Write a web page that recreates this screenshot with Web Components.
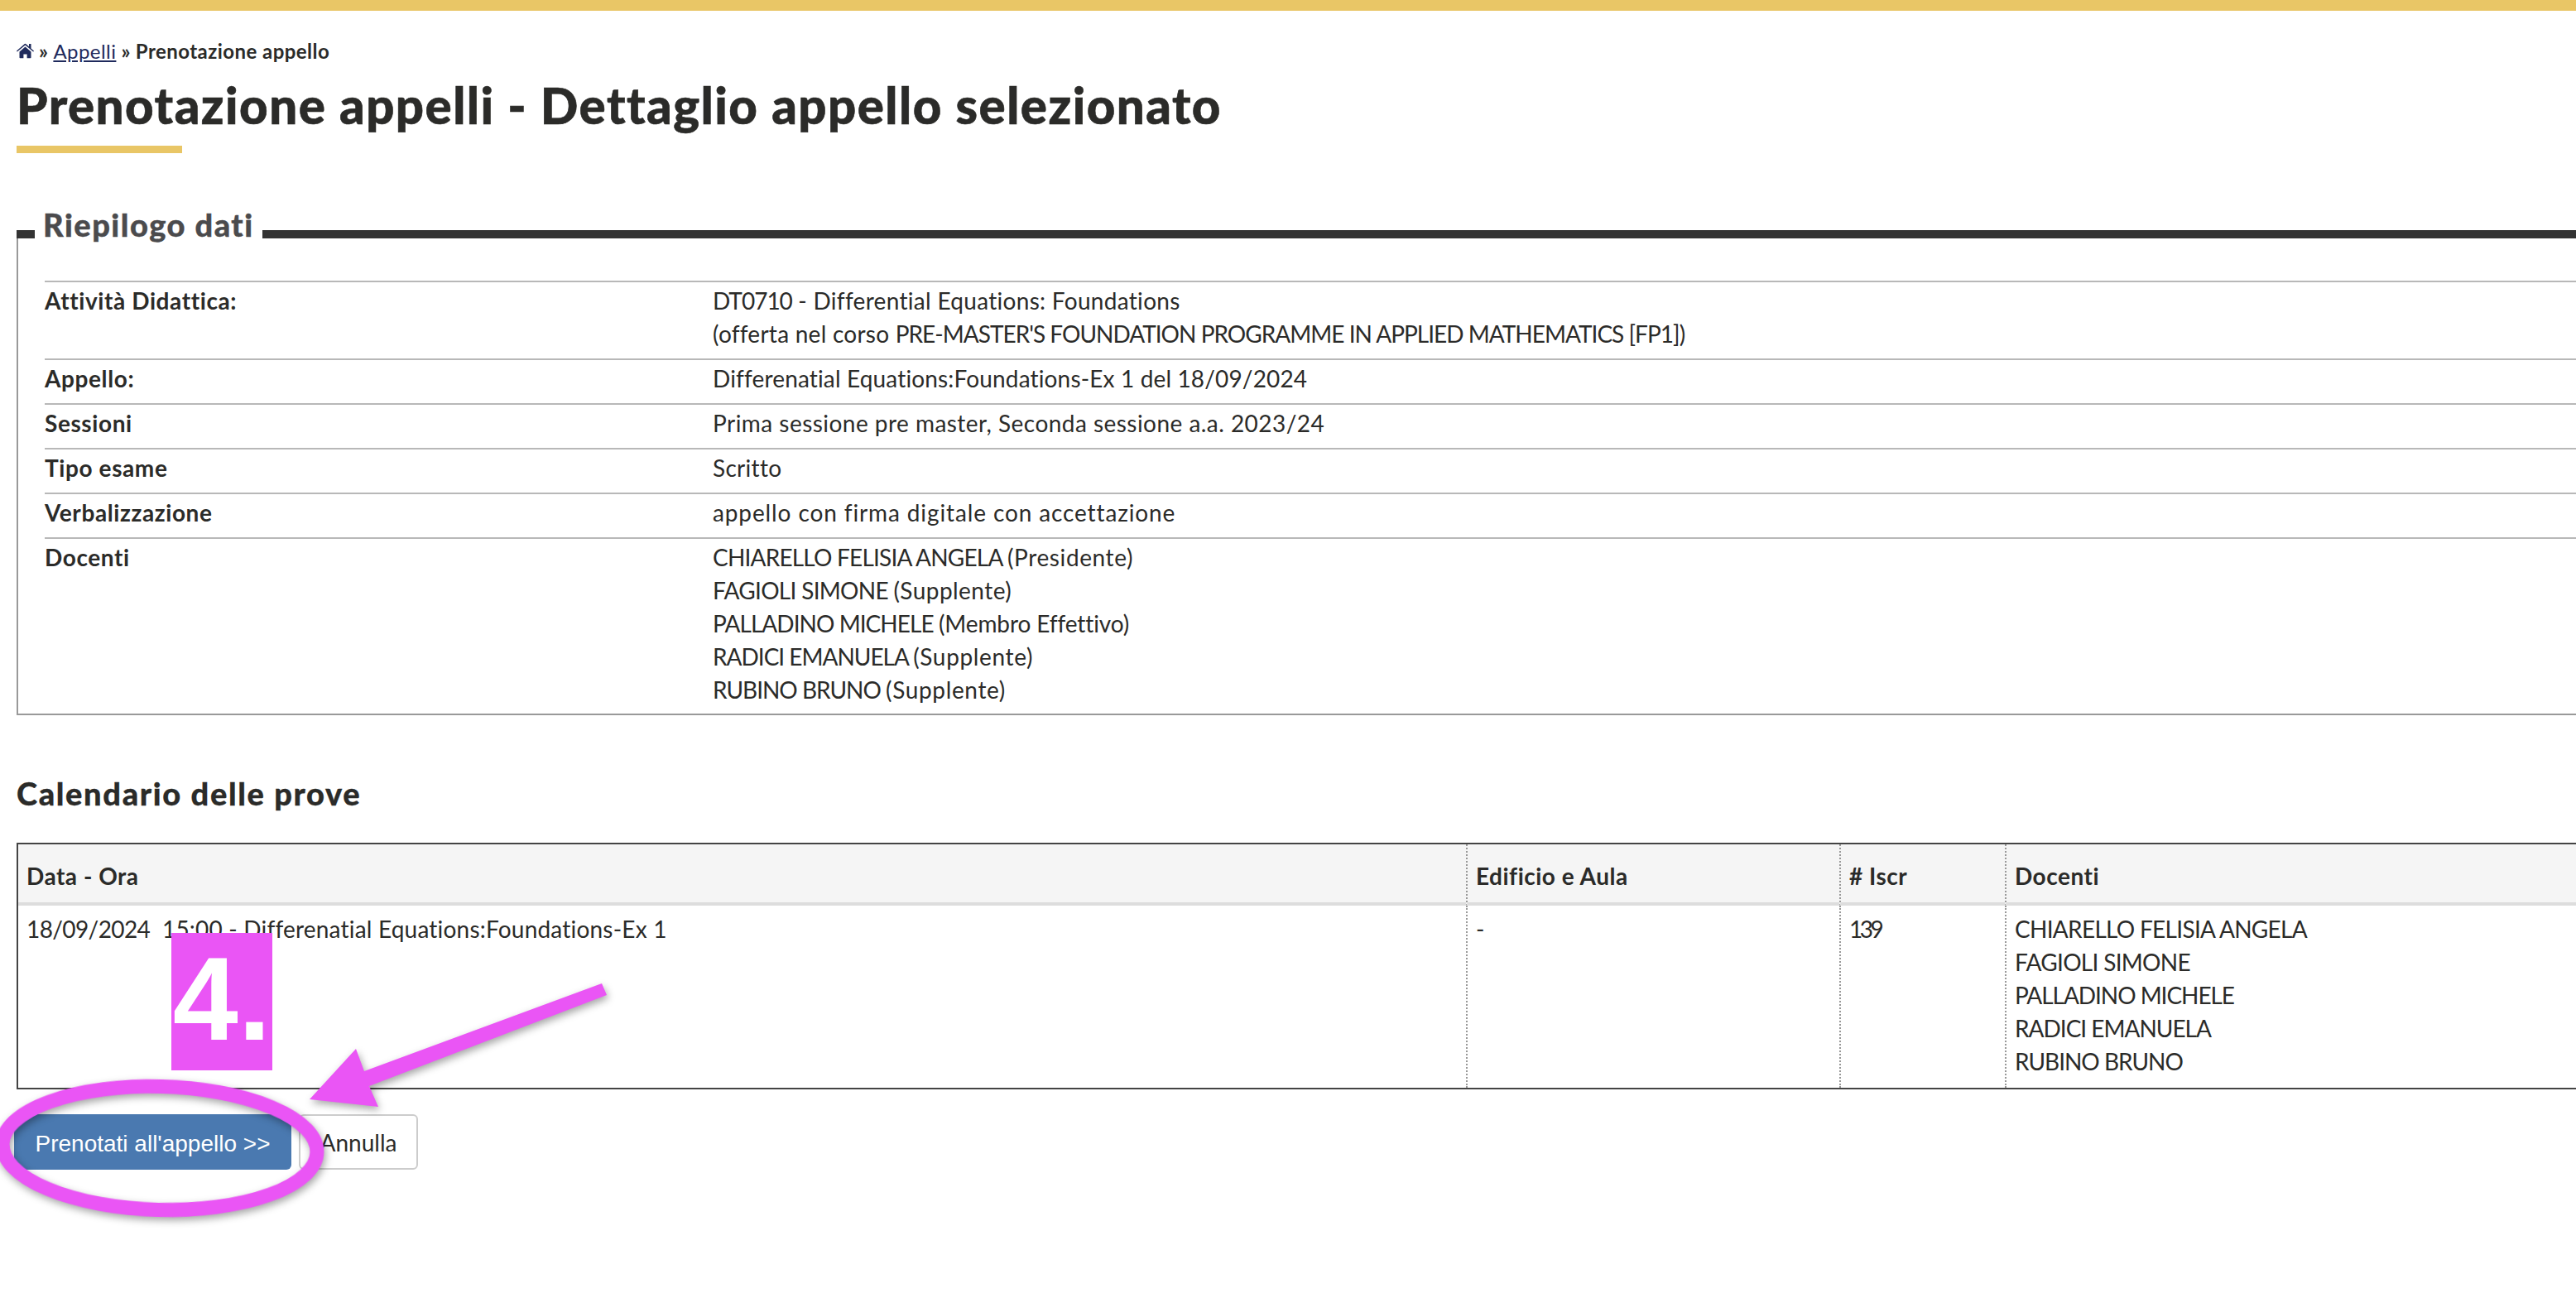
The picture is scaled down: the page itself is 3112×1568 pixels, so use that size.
<!DOCTYPE html>
<html lang="it">
<head>
<meta charset="utf-8">
<title>Prenotazione appelli</title>
<style>
  html, body { margin: 0; padding: 0; background: #fff; }
  body { font-family: Lato, "Liberation Sans", sans-serif; color: #2b2b29; overflow: hidden; height: 1568px; position: relative; }
</style>
</head>
<body>
<top-bar></top-bar>
<main-content>
  <bread-crumb></bread-crumb>
  <page-title>Prenotazione appelli - Dettaglio appello selezionato</page-title>
  <data-summary legend="Riepilogo dati"></data-summary>
  <section-title>Calendario delle prove</section-title>
  <exam-table></exam-table>
  <form-actions></form-actions>
</main-content>
<step-overlay></step-overlay>

<script>
// Lato is narrower in lowercase and wider in caps and digits than the reference font, so runs get their own spacing
const sp = (text, s) => `<span style="letter-spacing:${s}px">${text}</span>`;

class TopBar extends HTMLElement {
  constructor() {
    super();
    this.attachShadow({ mode: "open" }).innerHTML = `<style>:host { display: block; height: 13px; background: #e9c666; }</style>`;
  }
}

class MainContent extends HTMLElement {
  constructor() {
    super();
    this.attachShadow({ mode: "open" }).innerHTML = `
      <style>:host { display: block; padding: 0 0 0 20px; }</style>
      <slot></slot>`;
  }
}

class BreadCrumb extends HTMLElement {
  constructor() {
    super();
    this.attachShadow({ mode: "open" }).innerHTML = `
      <style>
        :host { display: flex; align-items: center; gap: 6px; height: 30px; margin-top: 33px; font-size: 24px; font-weight: 700; color: #2b2b29; letter-spacing: .45px; }
        svg { width: 21px; height: 19px; fill: #1f2a5c; }
        a { color: #1f2a5c; font-weight: 400; text-decoration: underline; }
      </style>
      <svg viewBox="0 0 21 19"><path d="M10.5 4.6 L3.5 10.6 V17.6 a.7.7 0 0 0 .7.7 H8.4 V13.4 H12.6 V18.3 H16.8 a.7.7 0 0 0 .7-.7 V10.6 Z"/><path d="M21 9.4 L17.5 6.4 V1 H15 V4.3 L11.2 1 a1 1 0 0 0 -1.4 0 L0 9.4 L.8 10.5 L10.5 2.5 L20.2 10.5 Z"/></svg>
      <span>»</span><a href="#">Appelli</a><span>»</span><span>Prenotazione appello</span>`;
  }
}

class PageTitle extends HTMLElement {
  constructor() {
    super();
    this.attachShadow({ mode: "open" }).innerHTML = `
      <style>
        :host { display: block; margin-top: 16px; }
        h1 { margin: 0; font-size: 60px; line-height: 70px; font-weight: 900; letter-spacing: 1.45px; -webkit-text-stroke: .6px #2b2b29; color: #2b2b29; }
        div { width: 200px; height: 9px; margin-top: 14px; background: #e9c666; }
      </style>
      <h1><slot></slot></h1><div></div>`;
  }
}

class DataSummary extends HTMLElement {
  constructor() {
    super();
    const rows = [
      ["Attività Didattica:", [
        sp("DT0710", -1) + sp(" - Differential Equations: Foundations", .3),
        sp("(offerta nel corso ", .25) + sp("PRE-MASTER'S FOUNDATION PROGRAMME IN APPLIED MATHEMATICS [FP1])", -.98),
      ]],
      ["Appello:", [sp("Differenatial Equations:Foundations-Ex 1 del 18/09/2024", .15)]],
      ["Sessioni", [sp("Prima sessione pre master, Seconda sessione a.a. 2023/24", .46)]],
      ["Tipo esame", [sp("Scritto", .3)]],
      ["Verbalizzazione", [sp("appello con firma digitale con accettazione", .88)]],
      ["Docenti", [
        sp("CHIARELLO FELISIA ANGELA ", -.8) + sp("(Presidente)", .6),
        sp("FAGIOLI SIMONE ", -.7) + sp("(Supplente)", .45),
        sp("PALLADINO MICHELE ", -.95) + sp("(Membro Effettivo)", -.1),
        sp("RADICI EMANUELA ", -1) + sp("(Supplente)", .65),
        sp("RUBINO BRUNO ", -1) + sp("(Supplente)", .65),
      ]],
    ];
    const html = rows.map(([k, v]) => `
      <div class="row"><b>${k}</b><span>${v.map(l => `<div>${l}</div>`).join("")}</span></div>`).join("");
    this.attachShadow({ mode: "open" }).innerHTML = `
      <style>
        :host { display: block; margin-top: 70px; font-size: 28px; line-height: 40px; }
        .head { display: flex; align-items: flex-start; height: 54px; }
        .stub { width: 22px; height: 10px; margin-top: 23px; background: #333; }
        .legend { margin: -9px 10px 0 10px; font-size: 38px; line-height: 50px; font-weight: 900; letter-spacing: 1.5px; -webkit-text-stroke: .4px #4b4b4d; color: #4b4b4d; }
        .line { flex: 1; height: 10px; margin-top: 23px; background: #333; }
        .box { margin-top: -21px; height: 576px; box-sizing: border-box; padding: 51px 0 0 32px; border-left: 2px solid #999; border-bottom: 2px solid #999; }
        .row { display: grid; grid-template-columns: 807px 1fr; padding: 2px 0 10px; border-top: 2px solid #b8b8b8; }
        b { font-weight: 700; letter-spacing: .6px; }
      </style>
      <div class="head"><div class="stub"></div><div class="legend">${this.getAttribute("legend")}</div><div class="line"></div></div>
      <div class="box">${html}</div>`;
  }
}

class SectionTitle extends HTMLElement {
  constructor() {
    super();
    this.attachShadow({ mode: "open" }).innerHTML = `
      <style>:host { display: block; margin-top: 66px; font-size: 38px; line-height: 56px; font-weight: 900; letter-spacing: 1.65px; -webkit-text-stroke: .3px #2b2b29; color: #2b2b29; }</style>
      <slot></slot>`;
  }
}

class ExamTable extends HTMLElement {
  constructor() {
    super();
    const docenti = [["CHIARELLO FELISIA ANGELA", -.7], ["FAGIOLI SIMONE", -.7], ["PALLADINO MICHELE", -1.05], ["RADICI EMANUELA", -1], ["RUBINO BRUNO", -1]];
    this.attachShadow({ mode: "open" }).innerHTML = `
      <style>
        :host { display: block; margin-top: 32px; font-size: 28px; line-height: 40px; }
        .table { display: grid; grid-template-columns: 1749px 451px 200px 1fr; border-top: 2px solid #444; border-bottom: 2px solid #444; border-left: 2px solid #444; }
        .cell { padding: 8px 10px; border-left: 2px dotted #999; }
        .cell:nth-child(4n+1) { border-left: 0; padding-left: 10px; }
        .th { height: 43px; padding-top: 18px; padding-bottom: 9px; background: #f5f5f5; font-weight: 700; letter-spacing: .5px; border-bottom: 4px solid #ddd; }
        .td { height: 204px; }
      </style>
      <div class="table">
        <div class="cell th">Data - Ora</div>
        <div class="cell th">Edificio e Aula</div>
        <div class="cell th"># Iscr</div>
        <div class="cell th">Docenti</div>
        <div class="cell td">${sp("18/09/2024", -.6)}${sp("&nbsp; 15:00 - Differenatial Equations:Foundations-Ex 1", .2)}</div>
        <div class="cell td">-</div>
        <div class="cell td">${sp("139", -3.5)}</div>
        <div class="cell td">${docenti.map(([d, s]) => `<div>${sp(d, s)}</div>`).join("")}</div>
      </div>`;
  }
}

class FormActions extends HTMLElement {
  constructor() {
    super();
    this.attachShadow({ mode: "open" }).innerHTML = `
      <style>
        :host { display: flex; gap: 9px; margin: 30px 0 0 -3px; }
        button { height: 67px; box-sizing: border-box; border-radius: 6px; font-size: 28px; padding: 0; white-space: nowrap; }
        .primary { width: 335px; padding-top: 4px; background: #4a79b0; border: 0; color: #fff; font-family: "Liberation Sans", Arial, sans-serif; }
        .plain { width: 144px; background: #fff; border: 2px solid #ccc; color: #2b2b29; font-family: Lato, sans-serif; }
      </style>
      <button class="primary">Prenotati all'appello &gt;&gt;</button>
      <button class="plain">Annulla</button>`;
  }
}

class StepOverlay extends HTMLElement {
  constructor() {
    super();
    this.attachShadow({ mode: "open" }).innerHTML = `
      <style>
        :host { position: absolute; inset: 0; display: block; pointer-events: none; }
        svg { position: absolute; left: 0; top: 0; width: 3112px; height: 1568px; }
        .shadow { filter: drop-shadow(2px 4px 5px rgba(0,0,0,.35)); }
        .num { position: absolute; left: 207px; top: 1127px; width: 122px; height: 166px; background: #ea55f5; color: #fff; font: 700 142px/160px "Liberation Sans", Arial, sans-serif; text-align: center; }
      </style>
      <svg viewBox="0 0 3112 1568">
        <g class="shadow">
          <polygon fill="#ea55f5" points="727,1188 733,1202 446,1312 457,1337 374,1328 430,1267 440,1294"/>
          <ellipse cx="193" cy="1387" rx="190" ry="74.5" transform="rotate(1.5 193 1387)" fill="none" stroke="#ea55f5" stroke-width="17"/>
        </g>
      </svg>
      <div class="num">4.</div>`;
  }
}

customElements.define("top-bar", TopBar);
customElements.define("main-content", MainContent);
customElements.define("bread-crumb", BreadCrumb);
customElements.define("page-title", PageTitle);
customElements.define("data-summary", DataSummary);
customElements.define("section-title", SectionTitle);
customElements.define("exam-table", ExamTable);
customElements.define("form-actions", FormActions);
customElements.define("step-overlay", StepOverlay);
</script>
</body>
</html>
